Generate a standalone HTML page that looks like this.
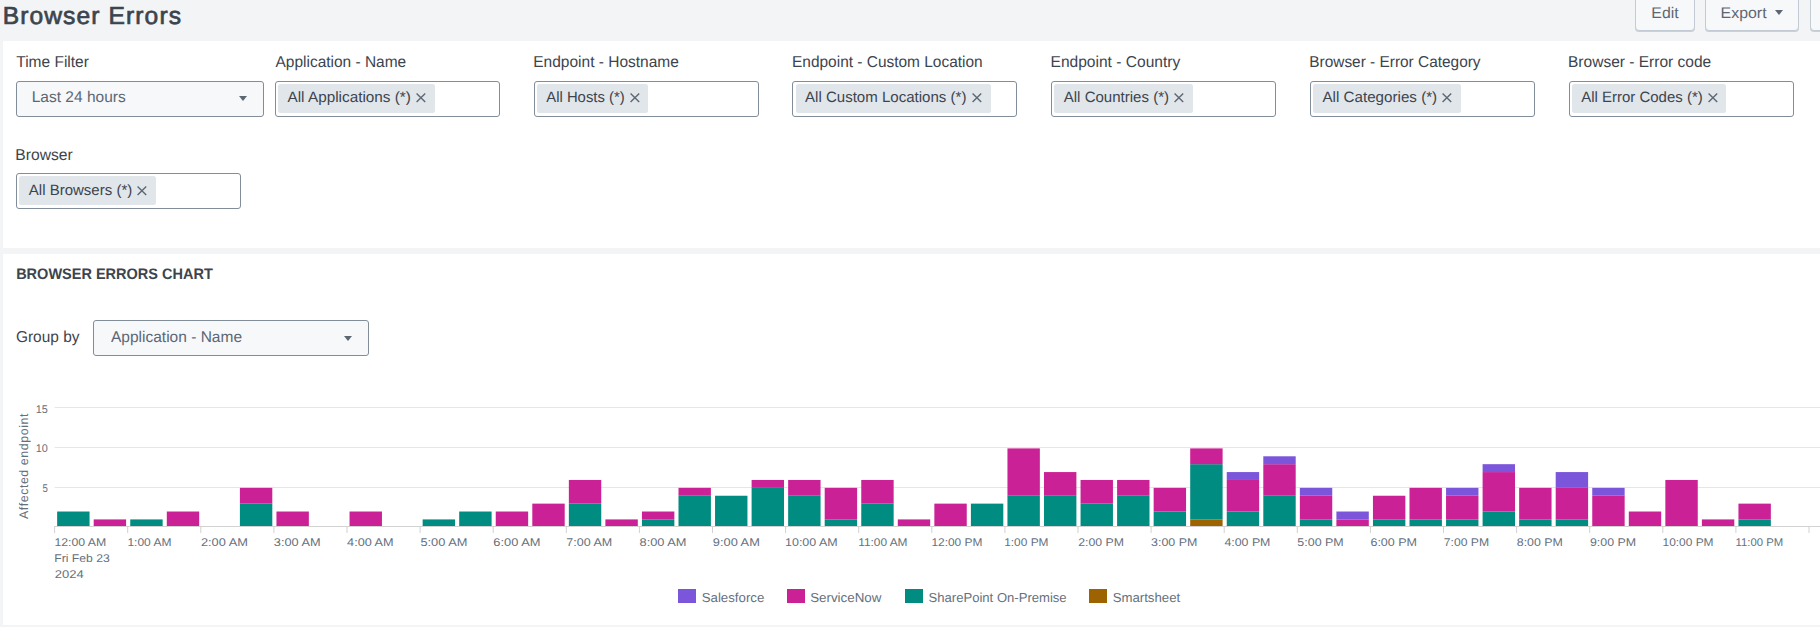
<!DOCTYPE html>
<html><head><meta charset="utf-8"><title>Browser Errors</title>
<style>
*{box-sizing:border-box;margin:0;padding:0}
html,body{width:1820px;height:627px;overflow:hidden;background:#f2f4f5;font-family:"Liberation Sans",sans-serif;color:#3c444d;text-rendering:geometricPrecision}
.abs,.lab,.ms,.xl,.sel,.btn,.panel,.ct,.st,.yl,.lg{position:absolute;white-space:nowrap}
.lab,.xl,.ct,.st,.yl,.lg,.bt,.fit{transform-origin:0 0}
.panel{background:#fff;left:3px;width:1817px}
h1{position:absolute;left:2.7px;top:0.4px;font-size:24.6px;font-weight:normal;letter-spacing:1.1px;-webkit-text-stroke:0.7px #3c444d;line-height:34px;color:#3c444d;white-space:nowrap}
.btn{top:-6px;height:37.2px;border:1px solid #c3cbd4;border-radius:4px;background:#f7f8fa;box-shadow:0 1px 0 #c9d0d8}
.bt{position:absolute;top:-4px;font-size:15.4px;line-height:36px;color:#5c6773;white-space:nowrap}
.lab{font-size:15.8px;line-height:20px;color:#3c444d}
.sel{height:36px;border:1px solid #818d99;border-radius:3px;background:#f7f8fa}
.st{font-size:15.5px;line-height:32px;color:#5c6773}
.car{position:absolute;width:0;height:0;border-left:4.2px solid transparent;border-right:4.2px solid transparent;border-top:5.4px solid #5c6773}
.ms{width:225px;height:36px;border:1px solid #818d99;border-radius:3px;background:#fff}
.chip{position:absolute;left:2.3px;top:2.3px;height:28.4px;background:#e1e6eb;border-radius:2.5px}
.ct{font-size:15px;line-height:27px;color:#3c444d}
.x{position:absolute;width:9.8px;height:9.6px;overflow:visible}
.x path{stroke:#5c6773;stroke-width:1.45;fill:none}
.xl{top:536px;font-size:11.2px;line-height:14px;color:#65707d}
.yl{font-size:11.2px;line-height:14px;color:#65707d}
.lg{top:590px;font-size:13px;line-height:16px;color:#65707d}
.sw{position:absolute;top:589.1px;width:18px;height:13.5px}
</style></head><body>
<h1>Browser Errors</h1>
<div class="btn" style="left:1635.4px;width:59.4px"></div><div class="bt" style="left:1651px;transform:translate(0.31px,0px) scaleX(1.0297)">Edit</div>
<div class="btn" style="left:1705.2px;width:93.7px"></div><div class="bt" style="left:1720px;transform:translate(0.61px,0px) scaleX(1.0326)">Export</div><i class="car" style="left:1774.7px;top:10.3px;border-left-width:4.25px;border-right-width:4.25px;border-top-width:5.2px"></i>
<div class="btn" style="left:1809.5px;width:30px"></div>
<div class="panel" style="top:41px;height:207px"></div>
<div class="panel" style="top:254px;height:371px"></div>
<div class="lab" style="left:16px;transform:translate(0.25px,0px) scaleX(0.9810);top:53px">Time Filter</div>
<div class="sel" style="left:16px;top:81px;width:248px"></div><div class="st" style="left:31px;transform:translate(0.75px,0px) scaleX(1.0000);top:82px">Last 24 hours</div><i class="car" style="left:238.7px;top:96.2px"></i>
<div class="lab" style="left:275px;transform:translate(0.50px,0px) scaleX(0.9793);top:53px">Application - Name</div><div class="ms" style="left:275.0px;top:81px"><div class="chip" style="width:156.4px"></div></div><svg style="left:415.9px;top:93.1px" class="x" viewBox="0 0 10 10"><path d="M0.5 0.5L9.5 9.5M9.5 0.5L0.5 9.5"/></svg><div class="ct" style="left:287px;transform:translate(0.50px,0px) scaleX(1.0208);top:84px">All Applications (*)</div>
<div class="lab" style="left:533px;transform:translate(0.27px,0px) scaleX(0.9812);top:53px">Endpoint - Hostname</div><div class="ms" style="left:534.0px;top:81px"><div class="chip" style="width:111.2px"></div></div><svg style="left:630.1px;top:93.1px" class="x" viewBox="0 0 10 10"><path d="M0.5 0.5L9.5 9.5M9.5 0.5L0.5 9.5"/></svg><div class="ct" style="left:546px;transform:translate(0.25px,0px) scaleX(0.9904);top:84px">All Hosts (*)</div>
<div class="lab" style="left:792px;transform:translate(0.03px,0px) scaleX(0.9780);top:53px">Endpoint - Custom Location</div><div class="ms" style="left:792.4px;top:81px"><div class="chip" style="width:195.6px"></div></div><svg style="left:972.1px;top:93.1px" class="x" viewBox="0 0 10 10"><path d="M0.5 0.5L9.5 9.5M9.5 0.5L0.5 9.5"/></svg><div class="ct" style="left:805px;transform:translate(0.00px,0px) scaleX(1.0031);top:84px">All Custom Locations (*)</div>
<div class="lab" style="left:1050px;transform:translate(0.52px,0px) scaleX(0.9846);top:53px">Endpoint - Country</div><div class="ms" style="left:1051.2px;top:81px"><div class="chip" style="width:138.3px"></div></div><svg style="left:1174.1px;top:93.1px" class="x" viewBox="0 0 10 10"><path d="M0.5 0.5L9.5 9.5M9.5 0.5L0.5 9.5"/></svg><div class="ct" style="left:1063px;transform:translate(0.75px,0px) scaleX(1.0024);top:84px">All Countries (*)</div>
<div class="lab" style="left:1309px;transform:translate(0.28px,0px) scaleX(0.9756);top:53px">Browser - Error Category</div><div class="ms" style="left:1310.0px;top:81px"><div class="chip" style="width:147.3px"></div></div><svg style="left:1442.1px;top:93.1px" class="x" viewBox="0 0 10 10"><path d="M0.5 0.5L9.5 9.5M9.5 0.5L0.5 9.5"/></svg><div class="ct" style="left:1322px;transform:translate(0.50px,0px) scaleX(1.0111);top:84px">All Categories (*)</div>
<div class="lab" style="left:1568px;transform:translate(0.02px,0px) scaleX(0.9826);top:53px">Browser - Error code</div><div class="ms" style="left:1568.9px;top:81px"><div class="chip" style="width:153.9px"></div></div><svg style="left:1708.2px;top:93.1px" class="x" viewBox="0 0 10 10"><path d="M0.5 0.5L9.5 9.5M9.5 0.5L0.5 9.5"/></svg><div class="ct" style="left:1581px;transform:translate(0.25px,0px) scaleX(0.9979);top:84px">All Error Codes (*)</div>

<div class="lab" style="left:15px;transform:translate(0.26px,0px) scaleX(0.9912);top:146px">Browser</div>
<div class="ms" style="left:16px;top:173px"><div class="chip" style="width:137px"></div></div><svg style="left:137.1px;top:186.4px" class="x" viewBox="0 0 10 10"><path d="M0.5 0.5L9.5 9.5M9.5 0.5L0.5 9.5"/></svg><div class="ct" style="left:28px;transform:translate(0.80px,0px) scaleX(1.0010);top:177px">All Browsers (*)</div>
<div class="abs fit" style="left:16px;transform:translate(0.14px,1.3px) scaleX(0.9553);top:264px;font-size:15.2px;font-weight:bold;line-height:20px;color:#3c444d">BROWSER ERRORS CHART</div>
<div class="lab" style="left:15px;transform:translate(0.97px,0px) scaleX(0.9766);top:328px">Group by</div>
<div class="sel" style="left:93px;top:320px;width:276px"></div><div class="st" style="left:111px;transform:translate(0.00px,0px) scaleX(1.0004);top:322px">Application - Name</div><i class="car" style="left:343.9px;top:335.9px"></i>
<svg class="abs" style="left:0;top:0" width="1820" height="627">
<rect x="54.6" y="407" width="1766" height="1" fill="#e6e6e6"/>
<rect x="54.6" y="447" width="1766" height="1" fill="#e6e6e6"/>
<rect x="54.6" y="487" width="1766" height="1" fill="#e6e6e6"/>
<rect x="57.15" y="511.52" width="32.4" height="14.48" fill="#008c80"/>
<rect x="93.70" y="519.41" width="32.4" height="6.59" fill="#cb2196"/>
<rect x="130.25" y="519.41" width="32.4" height="6.59" fill="#008c80"/>
<rect x="166.80" y="511.52" width="32.4" height="14.48" fill="#cb2196"/>
<rect x="239.90" y="503.63" width="32.4" height="22.37" fill="#008c80"/>
<rect x="239.90" y="487.85" width="32.4" height="15.78" fill="#cb2196"/>
<rect x="276.45" y="511.52" width="32.4" height="14.48" fill="#cb2196"/>
<rect x="349.55" y="511.52" width="32.4" height="14.48" fill="#cb2196"/>
<rect x="422.65" y="519.41" width="32.4" height="6.59" fill="#008c80"/>
<rect x="459.20" y="511.52" width="32.4" height="14.48" fill="#008c80"/>
<rect x="495.75" y="511.52" width="32.4" height="14.48" fill="#cb2196"/>
<rect x="532.30" y="503.63" width="32.4" height="22.37" fill="#cb2196"/>
<rect x="568.85" y="503.63" width="32.4" height="22.37" fill="#008c80"/>
<rect x="568.85" y="479.96" width="32.4" height="23.67" fill="#cb2196"/>
<rect x="605.40" y="519.41" width="32.4" height="6.59" fill="#cb2196"/>
<rect x="641.95" y="519.41" width="32.4" height="6.59" fill="#008c80"/>
<rect x="641.95" y="511.52" width="32.4" height="7.89" fill="#cb2196"/>
<rect x="678.50" y="495.74" width="32.4" height="30.26" fill="#008c80"/>
<rect x="678.50" y="487.85" width="32.4" height="7.89" fill="#cb2196"/>
<rect x="715.05" y="495.74" width="32.4" height="30.26" fill="#008c80"/>
<rect x="751.60" y="487.85" width="32.4" height="38.15" fill="#008c80"/>
<rect x="751.60" y="479.96" width="32.4" height="7.89" fill="#cb2196"/>
<rect x="788.15" y="495.74" width="32.4" height="30.26" fill="#008c80"/>
<rect x="788.15" y="479.96" width="32.4" height="15.78" fill="#cb2196"/>
<rect x="824.70" y="519.41" width="32.4" height="6.59" fill="#008c80"/>
<rect x="824.70" y="487.85" width="32.4" height="31.56" fill="#cb2196"/>
<rect x="861.25" y="503.63" width="32.4" height="22.37" fill="#008c80"/>
<rect x="861.25" y="479.96" width="32.4" height="23.67" fill="#cb2196"/>
<rect x="897.80" y="519.41" width="32.4" height="6.59" fill="#cb2196"/>
<rect x="934.35" y="503.63" width="32.4" height="22.37" fill="#cb2196"/>
<rect x="970.90" y="503.63" width="32.4" height="22.37" fill="#008c80"/>
<rect x="1007.45" y="495.74" width="32.4" height="30.26" fill="#008c80"/>
<rect x="1007.45" y="448.40" width="32.4" height="47.34" fill="#cb2196"/>
<rect x="1044.00" y="495.74" width="32.4" height="30.26" fill="#008c80"/>
<rect x="1044.00" y="472.07" width="32.4" height="23.67" fill="#cb2196"/>
<rect x="1080.55" y="503.63" width="32.4" height="22.37" fill="#008c80"/>
<rect x="1080.55" y="479.96" width="32.4" height="23.67" fill="#cb2196"/>
<rect x="1117.10" y="495.74" width="32.4" height="30.26" fill="#008c80"/>
<rect x="1117.10" y="479.96" width="32.4" height="15.78" fill="#cb2196"/>
<rect x="1153.65" y="511.52" width="32.4" height="14.48" fill="#008c80"/>
<rect x="1153.65" y="487.85" width="32.4" height="23.67" fill="#cb2196"/>
<rect x="1190.20" y="519.41" width="32.4" height="6.59" fill="#9d6300"/>
<rect x="1190.20" y="464.18" width="32.4" height="55.23" fill="#008c80"/>
<rect x="1190.20" y="448.40" width="32.4" height="15.78" fill="#cb2196"/>
<rect x="1226.75" y="511.52" width="32.4" height="14.48" fill="#008c80"/>
<rect x="1226.75" y="479.96" width="32.4" height="31.56" fill="#cb2196"/>
<rect x="1226.75" y="472.07" width="32.4" height="7.89" fill="#7b56db"/>
<rect x="1263.30" y="495.74" width="32.4" height="30.26" fill="#008c80"/>
<rect x="1263.30" y="464.18" width="32.4" height="31.56" fill="#cb2196"/>
<rect x="1263.30" y="456.29" width="32.4" height="7.89" fill="#7b56db"/>
<rect x="1299.85" y="519.41" width="32.4" height="6.59" fill="#008c80"/>
<rect x="1299.85" y="495.74" width="32.4" height="23.67" fill="#cb2196"/>
<rect x="1299.85" y="487.85" width="32.4" height="7.89" fill="#7b56db"/>
<rect x="1336.40" y="519.41" width="32.4" height="6.59" fill="#cb2196"/>
<rect x="1336.40" y="511.52" width="32.4" height="7.89" fill="#7b56db"/>
<rect x="1372.95" y="519.41" width="32.4" height="6.59" fill="#008c80"/>
<rect x="1372.95" y="495.74" width="32.4" height="23.67" fill="#cb2196"/>
<rect x="1409.50" y="519.41" width="32.4" height="6.59" fill="#008c80"/>
<rect x="1409.50" y="487.85" width="32.4" height="31.56" fill="#cb2196"/>
<rect x="1446.05" y="519.41" width="32.4" height="6.59" fill="#008c80"/>
<rect x="1446.05" y="495.74" width="32.4" height="23.67" fill="#cb2196"/>
<rect x="1446.05" y="487.85" width="32.4" height="7.89" fill="#7b56db"/>
<rect x="1482.60" y="511.52" width="32.4" height="14.48" fill="#008c80"/>
<rect x="1482.60" y="472.07" width="32.4" height="39.45" fill="#cb2196"/>
<rect x="1482.60" y="464.18" width="32.4" height="7.89" fill="#7b56db"/>
<rect x="1519.15" y="519.41" width="32.4" height="6.59" fill="#008c80"/>
<rect x="1519.15" y="487.85" width="32.4" height="31.56" fill="#cb2196"/>
<rect x="1555.70" y="519.41" width="32.4" height="6.59" fill="#008c80"/>
<rect x="1555.70" y="487.85" width="32.4" height="31.56" fill="#cb2196"/>
<rect x="1555.70" y="472.07" width="32.4" height="15.78" fill="#7b56db"/>
<rect x="1592.25" y="495.74" width="32.4" height="30.26" fill="#cb2196"/>
<rect x="1592.25" y="487.85" width="32.4" height="7.89" fill="#7b56db"/>
<rect x="1628.80" y="511.52" width="32.4" height="14.48" fill="#cb2196"/>
<rect x="1665.35" y="479.96" width="32.4" height="46.04" fill="#cb2196"/>
<rect x="1701.90" y="519.41" width="32.4" height="6.59" fill="#cb2196"/>
<rect x="1738.45" y="519.41" width="32.4" height="6.59" fill="#008c80"/>
<rect x="1738.45" y="503.63" width="32.4" height="15.78" fill="#cb2196"/>
<rect x="54.1" y="526" width="1766" height="1" fill="#d2d2d2"/>
<rect x="54.10" y="526" width="1" height="7" fill="#d2d2d2"/>
<rect x="127.20" y="526" width="1" height="7" fill="#d2d2d2"/>
<rect x="200.30" y="526" width="1" height="7" fill="#d2d2d2"/>
<rect x="273.40" y="526" width="1" height="7" fill="#d2d2d2"/>
<rect x="346.50" y="526" width="1" height="7" fill="#d2d2d2"/>
<rect x="419.60" y="526" width="1" height="7" fill="#d2d2d2"/>
<rect x="492.70" y="526" width="1" height="7" fill="#d2d2d2"/>
<rect x="565.80" y="526" width="1" height="7" fill="#d2d2d2"/>
<rect x="638.90" y="526" width="1" height="7" fill="#d2d2d2"/>
<rect x="712.00" y="526" width="1" height="7" fill="#d2d2d2"/>
<rect x="785.10" y="526" width="1" height="7" fill="#d2d2d2"/>
<rect x="858.20" y="526" width="1" height="7" fill="#d2d2d2"/>
<rect x="931.30" y="526" width="1" height="7" fill="#d2d2d2"/>
<rect x="1004.40" y="526" width="1" height="7" fill="#d2d2d2"/>
<rect x="1077.50" y="526" width="1" height="7" fill="#d2d2d2"/>
<rect x="1150.60" y="526" width="1" height="7" fill="#d2d2d2"/>
<rect x="1223.70" y="526" width="1" height="7" fill="#d2d2d2"/>
<rect x="1296.80" y="526" width="1" height="7" fill="#d2d2d2"/>
<rect x="1369.90" y="526" width="1" height="7" fill="#d2d2d2"/>
<rect x="1443.00" y="526" width="1" height="7" fill="#d2d2d2"/>
<rect x="1516.10" y="526" width="1" height="7" fill="#d2d2d2"/>
<rect x="1589.20" y="526" width="1" height="7" fill="#d2d2d2"/>
<rect x="1662.30" y="526" width="1" height="7" fill="#d2d2d2"/>
<rect x="1735.40" y="526" width="1" height="7" fill="#d2d2d2"/>
<rect x="1808.50" y="526" width="1" height="7" fill="#d2d2d2"/>
</svg>
<div class="yl" style="left:35px;transform:translate(0.77px,0px) scaleX(0.9689);top:403px">15</div><div class="yl" style="left:35px;transform:translate(0.77px,0px) scaleX(0.9689);top:442px">10</div><div class="yl" style="left:42px;transform:translate(0.47px,0px) scaleX(0.8571);top:482px">5</div>
<div class="abs" style="left:-36px;top:459px;width:120px;text-align:center;font-size:12.4px;letter-spacing:0.57px;line-height:14px;color:#65707d;transform:rotate(-90deg)">Affected endpoint</div>
<div class="xl" style="left:54px;transform:translate(0.38px,0px) scaleX(1.0967)">12:00 AM</div><div class="xl" style="left:127px;transform:translate(0.40px,0px) scaleX(1.0709)">1:00 AM</div><div class="xl" style="left:200px;transform:translate(0.93px,0px) scaleX(1.1421)">2:00 AM</div><div class="xl" style="left:273px;transform:translate(0.83px,0px) scaleX(1.1396)">3:00 AM</div><div class="xl" style="left:347px;transform:translate(0.12px,0px) scaleX(1.1325)">4:00 AM</div><div class="xl" style="left:420px;transform:translate(0.43px,0px) scaleX(1.1447)">5:00 AM</div><div class="xl" style="left:493px;transform:translate(0.33px,0px) scaleX(1.1497)">6:00 AM</div><div class="xl" style="left:566px;transform:translate(0.34px,0px) scaleX(1.1170)">7:00 AM</div><div class="xl" style="left:639px;transform:translate(0.53px,0px) scaleX(1.1447)">8:00 AM</div><div class="xl" style="left:712px;transform:translate(0.83px,0px) scaleX(1.1447)">9:00 AM</div><div class="xl" style="left:785px;transform:translate(0.07px,0px) scaleX(1.1121)">10:00 AM</div><div class="xl" style="left:858px;transform:translate(0.20px,0px) scaleX(1.0615)">11:00 AM</div><div class="xl" style="left:931px;transform:translate(0.40px,0px) scaleX(1.0659)">12:00 PM</div><div class="xl" style="left:1004px;transform:translate(0.20px,0px) scaleX(1.0625)">1:00 PM</div><div class="xl" style="left:1078px;transform:translate(0.25px,0px) scaleX(1.0981)">2:00 PM</div><div class="xl" style="left:1151px;transform:translate(0.04px,0px) scaleX(1.1106)">3:00 PM</div><div class="xl" style="left:1224px;transform:translate(0.42px,0px) scaleX(1.1037)">4:00 PM</div><div class="xl" style="left:1297px;transform:translate(0.34px,0px) scaleX(1.1130)">5:00 PM</div><div class="xl" style="left:1370px;transform:translate(0.44px,0px) scaleX(1.1180)">6:00 PM</div><div class="xl" style="left:1443px;transform:translate(0.76px,0px) scaleX(1.0857)">7:00 PM</div><div class="xl" style="left:1516px;transform:translate(0.75px,0px) scaleX(1.1056)">8:00 PM</div><div class="xl" style="left:1589px;transform:translate(0.95px,0px) scaleX(1.1056)">9:00 PM</div><div class="xl" style="left:1662px;transform:translate(0.50px,0px) scaleX(1.0659)">10:00 PM</div><div class="xl" style="left:1735px;transform:translate(0.54px,0px) scaleX(1.0110)">11:00 PM</div>
<div class="xl" style="left:54px;transform:translate(0.21px,0px) scaleX(1.0889);top:552px">Fri Feb 23</div><div class="xl" style="left:54px;transform:translate(0.72px,0px) scaleX(1.1625);top:568px">2024</div>
<div class="sw" style="left:677.9px;background:#7b56db"></div><div class="lg" style="left:701px;transform:translate(0.74px,0px) scaleX(1.0183)">Salesforce</div>
<div class="sw" style="left:786.7px;background:#cb2196"></div><div class="lg" style="left:810px;transform:translate(0.13px,0px) scaleX(1.0277)">ServiceNow</div>
<div class="sw" style="left:904.9px;background:#008c80"></div><div class="lg" style="left:928px;transform:translate(0.55px,0px) scaleX(1.0059)">SharePoint On-Premise</div>
<div class="sw" style="left:1089.1px;background:#9d6300"></div><div class="lg" style="left:1112px;transform:translate(0.64px,0px) scaleX(1.0160)">Smartsheet</div>
</body></html>
